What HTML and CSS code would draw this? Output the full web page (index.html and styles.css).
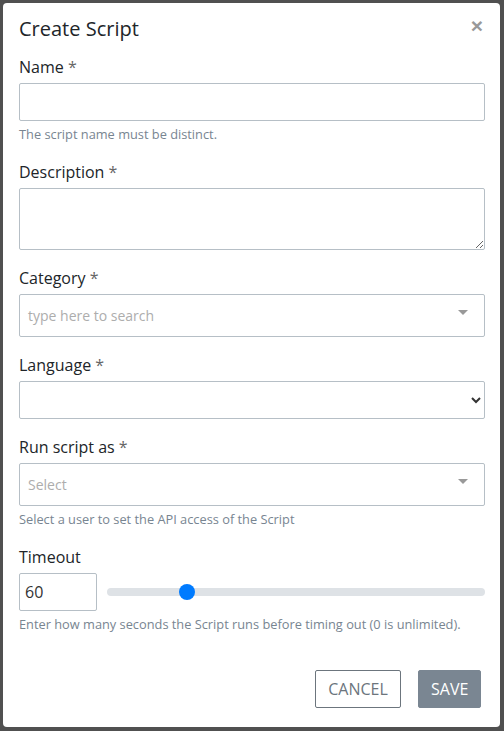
FILE: index.html
```html
<!DOCTYPE html>
<html>
<head>
<meta charset="utf-8">
<link rel="stylesheet" href="styles.css">
</head>
<body>
<div class="modal">
  <div class="modal-header">
    <h5 class="modal-title">Create Script</h5>
    <span class="close">×</span>
  </div>
  <div class="modal-body">
    <div class="group">
      <label class="label">Name <span class="req">*</span></label>
      <input class="control" type="text">
      <div class="help">The script name must be distinct.</div>
    </div>
    <div class="group">
      <label class="label">Description <span class="req">*</span></label>
      <textarea class="control area"></textarea>
    </div>
    <div class="group">
      <label class="label">Category <span class="req">*</span></label>
      <div class="multiselect">
        <span class="placeholder">type here to search</span>
        <span class="caret"></span>
      </div>
    </div>
    <div class="group">
      <label class="label">Language <span class="req">*</span></label>
      <select class="control select"><option></option></select>
    </div>
    <div class="group">
      <label class="label">Run script as <span class="req">*</span></label>
      <div class="multiselect">
        <span class="placeholder">Select</span>
        <span class="caret"></span>
      </div>
      <div class="help">Select a user to set the API access of the Script</div>
    </div>
    <div class="group">
      <label class="label">Timeout</label>
      <div class="timeout-row">
        <input class="control timeout" type="text" value="60">
        <input class="range" type="range" min="0" max="300" value="60">
      </div>
      <div class="help">Enter how many seconds the Script runs before timing out (0 is unlimited).</div>
    </div>
  </div>
  <div class="modal-footer">
    <button class="btn btn-cancel">CANCEL</button>
    <button class="btn btn-save">SAVE</button>
  </div>
</div>
</body>
</html>
```
FILE: styles.css
```css
* { box-sizing: border-box; }
html, body { height: 100%; }
body {
  margin: 0;
  background: #505050;
  font-family: "Open Sans", "Noto Sans", sans-serif;
  color: #333;
  overflow: hidden;
}
.modal {
  margin: 3px 4px 4px 3px;
  height: 724px;
  background: #fff;
  border-radius: 4px;
  display: flex;
  flex-direction: column;
}
.modal-header {
  display: flex;
  justify-content: space-between;
  align-items: flex-start;
  padding: 11px 16px 0 16px;
}
.modal-title {
  margin: 0;
  font-size: 20px;
  font-weight: 400;
  line-height: 30px;
  color: #212529;
}
.close {
  font-family: "Liberation Sans", Arial, sans-serif;
  font-size: 21px;
  font-weight: 700;
  line-height: 21px;
  color: #999;
  margin-top: 1px;
  margin-right: 1px;
}
.modal-body {
  padding: 11px 15px 0 16px;
}
.group { margin-bottom: 16px; }
.label {
  display: block;
  font-size: 16px;
  line-height: 24px;
  margin-bottom: 4px;
  color: #212529;
}
.req { color: #666; }
.control {
  display: block;
  width: 100%;
  height: 38px;
  border: 1px solid #b6bfc6;
  border-radius: 2px;
  background: #fff;
  font-family: "Open Sans", sans-serif;
  font-size: 16px;
  color: #333;
  padding: 0 5px;
  outline: none;
}
.area {
  height: 62px;
  resize: vertical;
}
.select {
  height: 38px;
  color: #333;
}
.help {
  margin-top: 4px;
  font-size: 12.8px;
  line-height: 19px;
  color: #788591;
}
.multiselect {
  position: relative;
  height: 43px;
  border: 1px solid #b6bfc6;
  border-radius: 2px;
  display: flex;
  align-items: center;
  padding: 0 8px;
}
.placeholder {
  font-size: 14px;
  color: #adadad;
}
.caret {
  position: absolute;
  right: 16px;
  top: 15px;
  width: 0;
  height: 0;
  border-left: 5px solid transparent;
  border-right: 5px solid transparent;
  border-top: 5px solid #999;
}
.timeout-row {
  display: flex;
  align-items: center;
  gap: 10px;
}
.timeout {
  width: 78px;
  flex: none;
}
.range {
  -webkit-appearance: none;
  appearance: none;
  flex: 1;
  margin: 0;
  height: 16px;
  background: transparent;
}
.range::-webkit-slider-runnable-track {
  height: 8px;
  background: #dee2e6;
  border-radius: 4px;
}
.range::-webkit-slider-thumb {
  -webkit-appearance: none;
  width: 16px;
  height: 16px;
  border-radius: 50%;
  background: #007bff;
  margin-top: -4px;
  border: none;
}
.modal-footer {
  margin-top: auto;
  display: flex;
  justify-content: flex-end;
  gap: 17px;
  padding: 0 19px 19px 0;
}
.btn {
  height: 38px;
  font-family: "Open Sans", sans-serif;
  font-size: 16px;
  border-radius: 2px;
  padding: 0 12px;
}
.btn-cancel {
  background: #fff;
  border: 1px solid #6c757d;
  color: #6c757d;
  width: 86px;
}
.btn-save {
  background: #7a8692;
  border: 1px solid #7a8692;
  color: #fff;
  width: 63px;
}
```
